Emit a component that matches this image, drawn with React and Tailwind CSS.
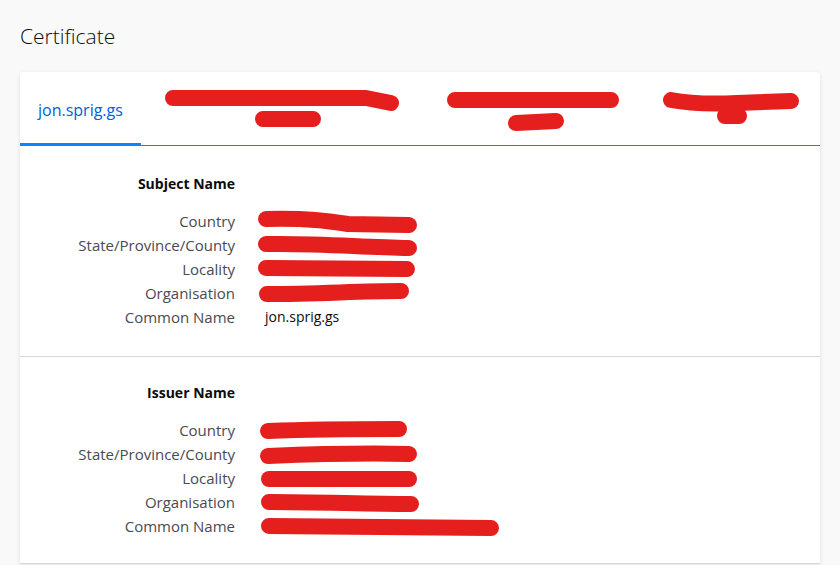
import React from 'react';

const FONT = { fontFamily: "'Open Sans', 'Noto Sans', sans-serif" };
const RED = '#e51e1e';

// redaction scribbles, one per value cell (paths in cell coordinates)
const Scribble = ({ d, width = 170 }) => (
  <svg width={width} height="24" className="-ml-[7px] overflow-visible block">
    <path d={d} fill="none" stroke={RED} strokeWidth="16" strokeLinecap="round" strokeLinejoin="round" />
  </svg>
);

const SUBJECT = [
  { label: 'Country', d: 'M8 10 C50 9 70 12 90 15 L151 16' },
  { label: 'State/Province/County', d: 'M8 11 C60 10 100 14 151 15' },
  { label: 'Locality', d: 'M8 11 L149 12' },
  { label: 'Organisation', d: 'M9 13 C60 13 100 10 143 10' },
  { label: 'Common Name', text: 'jon.sprig.gs' },
];

const ISSUER = [
  { label: 'Country', d: 'M10 13 C60 11 100 11 141 11' },
  { label: 'State/Province/County', d: 'M10 14 C60 12 110 11 151 12' },
  { label: 'Locality', d: 'M11 13 L151 13' },
  { label: 'Organisation', d: 'M11 12 C60 12 110 14 153 14' },
  { label: 'Common Name', d: 'M11 12 C100 13 180 14 233 14', width: 250 },
];

const Section = ({ title, rows, className }) => (
  <div className={className}>
    <div className="grid grid-cols-[215px_1fr] gap-x-[30px]">
      <div className="text-right text-[14px] font-bold leading-[24px] text-[#0c0c0d] mb-[13px]">{title}</div>
      <div />
      {rows.map((r) => (
        <React.Fragment key={r.label}>
          <div className="text-right text-[15px] leading-[24px] text-[#4a4a4f]">{r.label}</div>
          <div className="h-[24px] text-[14px] leading-[24px] text-[#0c0c0d]">
            {r.text ? r.text : <Scribble d={r.d} width={r.width} />}
          </div>
        </React.Fragment>
      ))}
    </div>
  </div>
);

const TabScribble = ({ width, d }) => (
  <svg width={width} height="71" className="overflow-visible block">
    <path d={d} fill="none" stroke={RED} strokeWidth="16" strokeLinecap="round" strokeLinejoin="round" />
  </svg>
);

export default function App() {
  return (
    <div className="min-h-screen bg-[#f9f9fa] px-5 pt-[18px]" style={FONT}>
      <h1 className="text-[21px] font-light leading-[36px] text-[#0c0c0d]">Certificate</h1>

      <div className="mt-[18px] w-[800px] rounded-t bg-white shadow-[0_1px_4px_rgba(12,12,13,0.1)]">
        {/* tabs */}
        <div className="flex h-[73px]">
          <div className="flex items-center border-b-[2px] border-solid border-[#0a84ff] bg-white px-[18px] pt-[4px] text-[16px] text-[#0060df]">
            jon.sprig.gs
          </div>
          <div className="px-[18px]">
            <TabScribble width={250} d="M14 26 L207 26 L232 31 M104 47 L154 47" />
          </div>
          <div className="px-[18px]">
            <TabScribble width={176} d="M10 28 L166 28 M71 51 L111 49" />
          </div>
          <div className="px-[18px]">
            <TabScribble width={146} d="M14 28 Q40 33 80 31 L134 29 M68 44 L82 44" />
          </div>
        </div>
        <div className="h-px bg-[#0a84ff]" />

        <Section title="Subject Name" rows={SUBJECT} className="pt-[26px] pb-[27px]" />
        <div className="h-px bg-[#d7d7db]" />
        <Section title="Issuer Name" rows={ISSUER} className="pt-[24px] pb-[25px]" />
        <div className="h-px bg-[#d7d7db]" />
      </div>
    </div>
  );
}
